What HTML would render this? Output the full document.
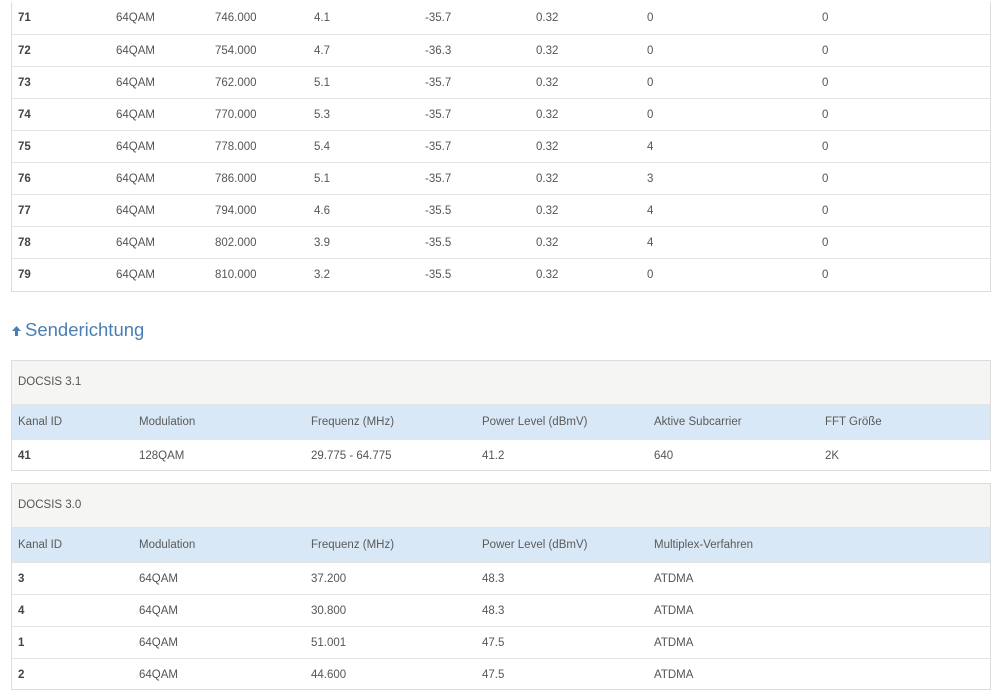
<!DOCTYPE html>
<html><head><meta charset="utf-8"><style>
body{margin:0;width:999px;height:700px;background:#fff;font-family:"Liberation Sans",sans-serif;font-size:11.5px;color:#555;position:relative;overflow:hidden}
.box{position:absolute;left:11px;width:980px;border:1px solid #ddd;box-sizing:border-box}
.r{position:relative;height:32px;border-top:1px solid #e3e3e3;box-sizing:border-box}
.r:first-child{border-top:none}
.r span{position:absolute;top:1px;line-height:31px}
.r span:first-child{font-weight:bold;color:#444}
.cap{height:44px;background:#f5f5f3;line-height:42px;padding-left:6px;box-sizing:border-box;border-bottom:1px solid #e3e3e3}
.hd{position:relative;height:34px;background:#d9e8f6;box-sizing:border-box}
.hd span{position:absolute;top:0;line-height:34px;color:#5a5a5a}
h2{position:absolute;left:11px;top:319px;margin:0;font-weight:normal;font-size:18.5px;color:#4a7fb5}
</style></head><body>
<div class="box" style="top:2px;height:290px;border-top:none">
<div class="r" style="height:32px"><span style="left:6px">71</span><span style="left:104px">64QAM</span><span style="left:203px">746.000</span><span style="left:302px">4.1</span><span style="left:413px">-35.7</span><span style="left:524px">0.32</span><span style="left:635px">0</span><span style="left:810px">0</span></div>
<div class="r"><span style="left:6px">72</span><span style="left:104px">64QAM</span><span style="left:203px">754.000</span><span style="left:302px">4.7</span><span style="left:413px">-36.3</span><span style="left:524px">0.32</span><span style="left:635px">0</span><span style="left:810px">0</span></div>
<div class="r"><span style="left:6px">73</span><span style="left:104px">64QAM</span><span style="left:203px">762.000</span><span style="left:302px">5.1</span><span style="left:413px">-35.7</span><span style="left:524px">0.32</span><span style="left:635px">0</span><span style="left:810px">0</span></div>
<div class="r"><span style="left:6px">74</span><span style="left:104px">64QAM</span><span style="left:203px">770.000</span><span style="left:302px">5.3</span><span style="left:413px">-35.7</span><span style="left:524px">0.32</span><span style="left:635px">0</span><span style="left:810px">0</span></div>
<div class="r"><span style="left:6px">75</span><span style="left:104px">64QAM</span><span style="left:203px">778.000</span><span style="left:302px">5.4</span><span style="left:413px">-35.7</span><span style="left:524px">0.32</span><span style="left:635px">4</span><span style="left:810px">0</span></div>
<div class="r"><span style="left:6px">76</span><span style="left:104px">64QAM</span><span style="left:203px">786.000</span><span style="left:302px">5.1</span><span style="left:413px">-35.7</span><span style="left:524px">0.32</span><span style="left:635px">3</span><span style="left:810px">0</span></div>
<div class="r"><span style="left:6px">77</span><span style="left:104px">64QAM</span><span style="left:203px">794.000</span><span style="left:302px">4.6</span><span style="left:413px">-35.5</span><span style="left:524px">0.32</span><span style="left:635px">4</span><span style="left:810px">0</span></div>
<div class="r"><span style="left:6px">78</span><span style="left:104px">64QAM</span><span style="left:203px">802.000</span><span style="left:302px">3.9</span><span style="left:413px">-35.5</span><span style="left:524px">0.32</span><span style="left:635px">4</span><span style="left:810px">0</span></div>
<div class="r"><span style="left:6px">79</span><span style="left:104px">64QAM</span><span style="left:203px">810.000</span><span style="left:302px">3.2</span><span style="left:413px">-35.5</span><span style="left:524px">0.32</span><span style="left:635px">0</span><span style="left:810px">0</span></div>
</div>
<h2><svg width="11" height="12" viewBox="0 0 11 12" style="vertical-align:-1px;margin-right:3px"><path d="M5.5 1 L10 6 L7 6 L7 11 L4 11 L4 6 L1 6 Z" fill="#4a7fb5"/></svg>Senderichtung</h2>
<div class="box" style="top:360px;height:111px">
<div class="cap">DOCSIS 3.1</div>
<div class="hd"><span style="left:6px">Kanal ID</span><span style="left:127px">Modulation</span><span style="left:299px">Frequenz (MHz)</span><span style="left:470px">Power Level (dBmV)</span><span style="left:642px">Aktive Subcarrier</span><span style="left:813px">FFT Größe</span></div>
<div class="r"><span style="left:6px">41</span><span style="left:127px">128QAM</span><span style="left:299px">29.775 - 64.775</span><span style="left:470px">41.2</span><span style="left:642px">640</span><span style="left:813px">2K</span></div>
</div>
<div class="box" style="top:483px;height:207px">
<div class="cap">DOCSIS 3.0</div>
<div class="hd"><span style="left:6px">Kanal ID</span><span style="left:127px">Modulation</span><span style="left:299px">Frequenz (MHz)</span><span style="left:470px">Power Level (dBmV)</span><span style="left:642px">Multiplex-Verfahren</span></div>
<div class="r"><span style="left:6px">3</span><span style="left:127px">64QAM</span><span style="left:299px">37.200</span><span style="left:470px">48.3</span><span style="left:642px">ATDMA</span></div>
<div class="r" style="border-top:1px solid #e3e3e3"><span style="left:6px">4</span><span style="left:127px">64QAM</span><span style="left:299px">30.800</span><span style="left:470px">48.3</span><span style="left:642px">ATDMA</span></div>
<div class="r" style="border-top:1px solid #e3e3e3"><span style="left:6px">1</span><span style="left:127px">64QAM</span><span style="left:299px">51.001</span><span style="left:470px">47.5</span><span style="left:642px">ATDMA</span></div>
<div class="r" style="border-top:1px solid #e3e3e3"><span style="left:6px">2</span><span style="left:127px">64QAM</span><span style="left:299px">44.600</span><span style="left:470px">47.5</span><span style="left:642px">ATDMA</span></div>
</div>
</body></html>
